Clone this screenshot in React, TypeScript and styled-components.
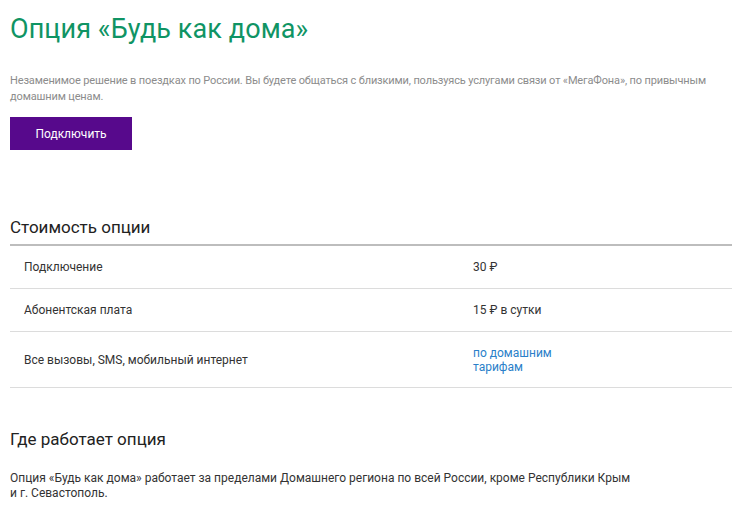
import React from "react";
import styled, { createGlobalStyle } from "styled-components";

const Global = createGlobalStyle`
  html, body { margin: 0; padding: 0; background: #fff; }
  body { font-family: Roboto, "Noto Sans", Arial, sans-serif; -webkit-font-smoothing: antialiased; }
  * { box-sizing: border-box; }
`;

const Page = styled.main`
  padding: 0 11px 0 10px;
  width: 743px;
`;

const Title = styled.h1`
  margin: 13px 0 0;
  font-size: 27px;
  line-height: 33px;
  font-weight: 400;
  color: #0f9464;
  letter-spacing: 0.1px;
`;

const Lead = styled.p`
  margin: 27px 0 0;
  font-size: 11px;
  line-height: 16px;
  color: #8c8c8c;
  letter-spacing: -0.14px;
`;

const ConnectButton = styled.button`
  display: block;
  margin-top: 12px;
  width: 122px;
  height: 33px;
  border: 0;
  border-radius: 0;
  background: #57098c;
  color: #fff;
  font-family: inherit;
  font-size: 12px;
  cursor: pointer;
`;

const SectionTitle = styled.h2<{ $top: number; $ruled?: boolean }>`
  margin: ${(p) => p.$top}px 0 0;
  font-size: 17px;
  line-height: 22px;
  font-weight: 400;
  color: #222;
  padding-bottom: ${(p) => (p.$ruled ? 6 : 0)}px;
  border-bottom: ${(p) => (p.$ruled ? "2px solid #bdbdbd" : "none")};
`;

const Table = styled.div`
  display: grid;
  grid-template-columns: 463px 1fr;
`;

const Cell = styled.div`
  padding: 14px 0 13px;
  font-size: 12px;
  line-height: 15px;
  color: #333;
  border-bottom: 1px solid #dcdcdc;
  display: flex;
  align-items: center;
  &:nth-child(odd) { padding-left: 14px; }
`;

const Link = styled.a`
  color: #2a7fc9;
  text-decoration: none;
  line-height: 14px;
  display: block;
  width: 90px;
`;

const Body = styled.p`
  margin: 21px 0 0;
  font-size: 12px;
  line-height: 15px;
  color: #333;
  max-width: 645px;
`;

const whereText =
  "Опция «Будь как дома» работает за пределами Домашнего региона по всей России, кроме Республики Крым и\u00a0г.\u00a0Севастополь.";

export default function App() {
  return (
    <>
      <Global />
      <Page>
        <Title>Опция «Будь как дома»</Title>
        <Lead>
          Незаменимое решение в поездках по России. Вы будете общаться с близкими, пользуясь услугами связи от «МегаФона», по привычным домашним ценам.
        </Lead>
        <ConnectButton>Подключить</ConnectButton>

        <SectionTitle $top={66} $ruled>Стоимость опции</SectionTitle>
        <Table>
          <Cell>Подключение</Cell>
          <Cell>30 ₽</Cell>
          <Cell>Абонентская плата</Cell>
          <Cell>15 ₽ в сутки</Cell>
          <Cell>Все вызовы, SMS, мобильный интернет</Cell>
          <Cell>
            <Link href="#">по домашним тарифам</Link>
          </Cell>
        </Table>

        <SectionTitle $top={40}>Где работает опция</SectionTitle>
        <Body>{whereText}</Body>
      </Page>
    </>
  );
}
